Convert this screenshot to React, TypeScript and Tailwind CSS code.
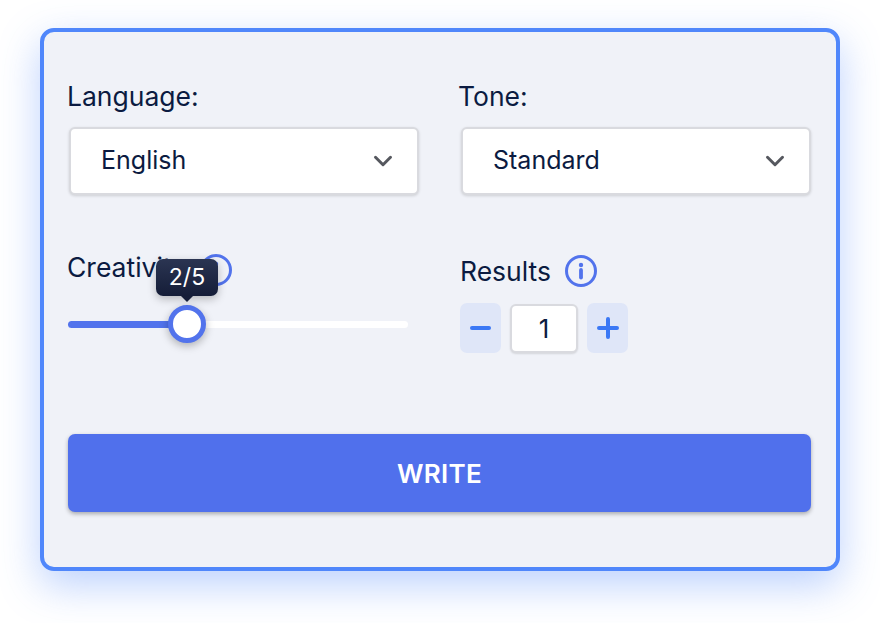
import { ChevronDown } from "lucide-react";

const InfoIcon = () => (
  <svg width="32" height="32" viewBox="0 0 32 32" fill="none">
    <circle cx="16" cy="16" r="14.5" stroke="#5273ec" strokeWidth="3" />
    <circle cx="16" cy="10" r="2.2" fill="#5273ec" />
    <path d="M16 15v7.5" stroke="#5273ec" strokeWidth="3.8" strokeLinecap="round" />
  </svg>
);

const Select = ({ value }: { value: string }) => (
  <div className="ml-[3px] mt-[14px] flex h-[68px] w-[350px] items-center justify-between rounded-[6px] border-2 border-[#d9dadf] bg-white pl-[30px] pr-[19px] text-[25px] text-[#0b1b41] shadow-[0_1px_3px_rgba(0,0,0,0.15)]">
    <span>{value}</span>
    <ChevronDown size={30} strokeWidth={2.4} className="text-[#56585f]" />
  </div>
);

const StepButton = ({ children }: { children: React.ReactNode }) => (
  <button className="flex h-[50px] w-[41px] items-center justify-center rounded-[7px] bg-[#dfe6f8]">
    {children}
  </button>
);

export default function App() {
  return (
    <div className="h-[623px] w-[880px] overflow-hidden bg-white pl-[40px] pt-[28px] font-['Inter',sans-serif]">
      <div className="h-[543px] w-[800px] rounded-[14px] border-4 border-[#5087fb] bg-[#f0f2f8] pl-[22px] pt-[49px] shadow-[0_14px_40px_rgba(80,135,251,0.38)]">
        <div className="grid grid-cols-[392px_360px]">
          <div>
            <div className="ml-[1px] h-[32px] text-[26.5px] font-[440] leading-[30px] text-[#0b1b41]">Language:</div>
            <Select value="English" />
          </div>
          <div>
            <div className="h-[32px] text-[26.5px] font-[440] leading-[30px] text-[#0b1b41]">Tone:</div>
            <Select value="Standard" />
          </div>
        </div>

        <div className="mt-[58px] grid h-[124px] grid-cols-[394px_360px]">
          <div>
            <div className="relative ml-[1px] h-[32px] text-[26.5px] font-[440] leading-[28px] text-[#0b1b41]">
              Creativity
              <span className="absolute left-[133px] top-[1px]">
                <InfoIcon />
              </span>
            </div>
            {/* slider */}
            <div className="relative ml-[2px] mt-[36px] h-[7px] w-[340px] rounded-full bg-white">
              <div className="h-full w-[119px] rounded-full bg-[#5273ec]" />
              <div className="absolute left-[100px] top-[-16px] h-[38px] w-[38px] rounded-full border-[5px] border-[#5273ec] bg-white shadow-[0_3px_8px_rgba(0,0,0,0.28)]" />
              <div className="absolute left-[88px] top-[-62px] flex h-[37px] w-[62px] items-center justify-center rounded-[7px] bg-gradient-to-b from-[#2b3552] to-[#151d38] text-[23px] text-white shadow-[0_3px_8px_rgba(0,0,0,0.25)]">
                2/5
                <span className="absolute left-[24px] top-[36px] h-0 w-0 border-x-[7px] border-t-[7px] border-x-transparent border-t-[#151d38]" />
              </div>
            </div>
          </div>
          <div className="pt-[2px]">
            <div className="flex h-[32px] items-center gap-[14px] text-[26.5px] font-[440] leading-[30px] text-[#0b1b41]">
              Results
              <InfoIcon />
            </div>
            <div className="mt-[16px] flex items-center gap-[9px]">
              <StepButton>
                <span className="h-[4px] w-[21px] rounded-full bg-[#3b78f5]" />
              </StepButton>
              <div className="flex h-[49px] w-[68px] items-center justify-center rounded-[6px] border-2 border-[#d9dadf] bg-white text-[26px] text-[#0b1b41] shadow-[0_1px_2px_rgba(0,0,0,0.12)]">
                1
              </div>
              <StepButton>
                <svg width="22" height="22" viewBox="0 0 22 22" fill="none">
                  <path d="M11 2v18M2 11h18" stroke="#3b78f5" strokeWidth="4" strokeLinecap="round" />
                </svg>
              </StepButton>
            </div>
          </div>
        </div>

        <button className="ml-[2px] mt-[57px] flex h-[78px] w-[743px] items-center justify-center rounded-[7px] bg-[#5070ec] text-[26px] font-semibold tracking-[0.01em] text-white shadow-[0_2px_4px_rgba(0,0,0,0.3)]">
          WRITE
        </button>
      </div>
    </div>
  );
}
